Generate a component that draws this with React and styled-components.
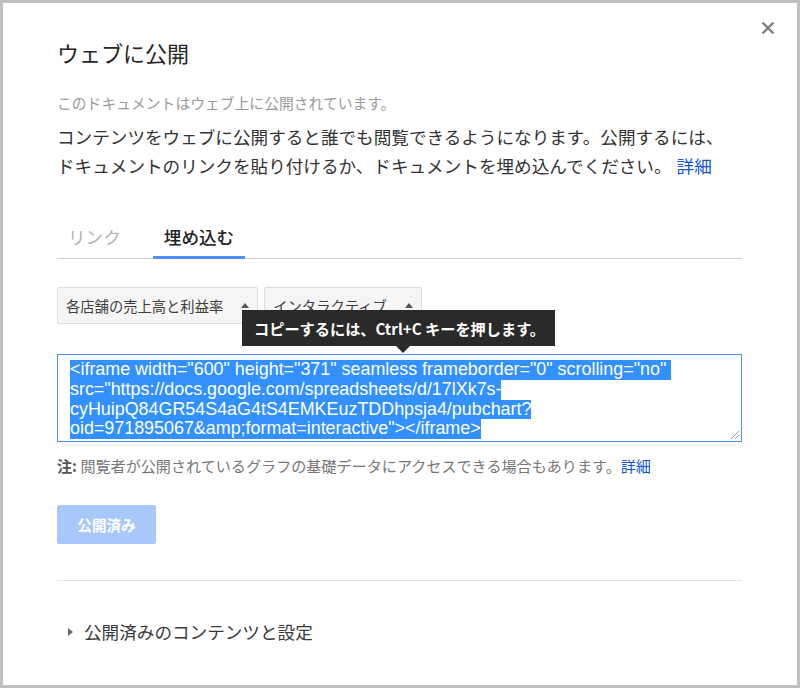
import React from "react";
import styled, { createGlobalStyle } from "styled-components";

const GlobalStyle = createGlobalStyle`
  html, body { margin: 0; padding: 0; background: #fff; }
  body { font-family: "Noto Sans CJK JP", "Noto Sans", sans-serif; }
  * { box-sizing: border-box; }
`;

const Frame = styled.div`
  position: relative;
  width: 800px;
  height: 688px;
  border: 3px solid #bfbfbf;
  background: #fff;
  padding: 0 55px 0 54px;
  display: flex;
  flex-direction: column;
`;

const CloseButton = styled.button`
  position: absolute;
  top: 15px;
  right: 19px;
  width: 20px;
  height: 20px;
  padding: 0;
  border: 0;
  background: transparent;
  display: flex;
  align-items: center;
  justify-content: center;
  cursor: pointer;
`;

const Title = styled.h1`
  margin: 36px 0 0;
  font-size: 22px;
  line-height: 26px;
  font-weight: 400;
  color: #262626;
`;

const Subtitle = styled.p`
  margin: 28px 0 0;
  font-size: 14.8px;
  line-height: 20px;
  color: #9a9a9a;
`;

const Paragraph = styled.p`
  margin: 9px 0 0;
  font-size: 17.6px;
  line-height: 29px;
  color: #333;
`;

const ParaLine = styled.span`
  display: block;
  white-space: nowrap;
`;

const Link = styled.a`
  color: #1155cc;
  text-decoration: none;
  margin-left: ${(p) => (p.$gap ? "5px" : "0")};
`;

const TabBar = styled.div`
  margin-top: 44px;
  display: flex;
  gap: 21px;
  border-bottom: 1px solid #cfcfcf;
`;

const Tab = styled.div`
  padding: 0 11px 6px;
  font-size: 17.6px;
  line-height: 26px;
  color: ${(p) => (p.$active ? "#222" : "#b3b3b3")};
  font-weight: ${(p) => (p.$active ? 500 : 400)};
  border-bottom: 3px solid ${(p) => (p.$active ? "#4d90fe" : "transparent")};
  margin-bottom: -1px;
`;

const EmbedArea = styled.div`
  position: relative;
  margin-top: 28px;
  display: flex;
  flex-direction: column;
`;

const SelectRow = styled.div`
  display: flex;
  gap: 6px;
`;

const Select = styled.div`
  height: 37px;
  display: flex;
  align-items: center;
  padding: 0 8px;
  gap: 18px;
  background: #f5f5f5;
  border: 1px solid #dcdcdc;
  border-radius: 2px;
  font-size: 14.3px;
  color: #3d3d3d;
`;

const Caret = styled.span`
  width: 0;
  height: 0;
  border-left: 4px solid transparent;
  border-right: 4px solid transparent;
  border-bottom: 5px solid #555;
`;

const Tooltip = styled.div`
  position: absolute;
  top: 23px;
  left: 185px;
  width: 313px;
  height: 36px;
  padding: 0 12px;
  display: flex;
  align-items: center;
  background: #2a2a2a;
  color: #fff;
  font-size: 15.2px;
  font-weight: 700;
  white-space: nowrap;
  z-index: 2;
  &::after {
    content: "";
    position: absolute;
    bottom: -7px;
    left: 154px;
    border-left: 7px solid transparent;
    border-right: 7px solid transparent;
    border-top: 7px solid #2a2a2a;
  }
`;

const CodeBox = styled.div`
  position: relative;
  margin-top: 30px;
  height: 88px;
  border: 1px solid #4d90fe;
  padding: 5px 12px 0;
  font-family: "Liberation Sans", Arial, sans-serif;
  font-size: 17.9px;
  line-height: 19.8px;
  background: #fff;
`;

const CodeLine = styled.span`
  display: block;
  width: fit-content;
  white-space: pre;
  background: #3390ff;
  color: #fff;
`;

const Grip = styled.svg`
  position: absolute;
  right: 1px;
  bottom: 1px;
`;

const Note = styled.p`
  margin: 13px 0 0;
  font-size: 15.1px;
  line-height: 20px;
  color: #777;
  b { color: #555; font-weight: 700; }
`;

const PublishedButton = styled.button`
  margin-top: 30px;
  width: 99px;
  height: 39px;
  border: 0;
  border-radius: 2px;
  background: #a8c7fb;
  color: #fff;
  font-family: inherit;
  font-size: 14.6px;
  font-weight: 700;
  padding: 0;
`;

const Divider = styled.hr`
  margin: 36px 0 0;
  border: 0;
  border-top: 1px solid #e3e3e3;
`;

const Disclosure = styled.div`
  margin-top: 38px;
  display: flex;
  align-items: center;
  gap: 11px;
  padding-left: 11px;
  font-size: 17.6px;
  line-height: 26px;
  color: #3a3a3a;
`;

const Triangle = styled.span`
  width: 0;
  height: 0;
  border-top: 4px solid transparent;
  border-bottom: 4px solid transparent;
  border-left: 5px solid #666;
`;

const codeLines = [
  '<iframe width="600" height="371" seamless frameborder="0" scrolling="no" ',
  'src="https://docs.google.com/spreadsheets/d/17lXk7s-',
  "cyHuipQ84GR54S4aG4tS4EMKEuzTDDhpsja4/pubchart?",
  'oid=971895067&amp;format=interactive"></iframe>',
];

export default function App() {
  return (
    <>
      <GlobalStyle />
      <Frame>
        <CloseButton aria-label="閉じる">
          <svg width="14" height="14" viewBox="0 0 14 14">
            <path d="M1.5 1.5 L12.5 12.5 M12.5 1.5 L1.5 12.5" stroke="#808080" strokeWidth="2.4" />
          </svg>
        </CloseButton>
        <Title>ウェブに公開</Title>
        <Subtitle>このドキュメントはウェブ上に公開されています。</Subtitle>
        <Paragraph>
          <ParaLine>コンテンツをウェブに公開すると誰でも閲覧できるようになります。公開するには、</ParaLine>
          <ParaLine>
            <span>ドキュメントのリンクを貼り付けるか、ドキュメントを埋め込んでください。</span>
            <Link href="#" $gap>詳細</Link>
          </ParaLine>
        </Paragraph>
        <TabBar>
          <Tab>リンク</Tab>
          <Tab $active>埋め込む</Tab>
        </TabBar>
        <EmbedArea>
          <SelectRow>
            <Select>
              各店舗の売上高と利益率
              <Caret />
            </Select>
            <Select>
              インタラクティブ
              <Caret />
            </Select>
          </SelectRow>
          <Tooltip>コピーするには、Ctrl+C キーを押します。</Tooltip>
          <CodeBox>
            {codeLines.map((l, i) => (
              <CodeLine key={i}>{l}</CodeLine>
            ))}
            <Grip width="11" height="11" viewBox="0 0 11 11">
              <path d="M10 2 L2 10 M10 6 L6 10" stroke="#999" strokeWidth="1" />
            </Grip>
          </CodeBox>
        </EmbedArea>
        <Note>
          <b>注:</b> 閲覧者が公開されているグラフの基礎データにアクセスできる場合もあります。
          <Link href="#">詳細</Link>
        </Note>
        <div>
          <PublishedButton disabled>公開済み</PublishedButton>
        </div>
        <Divider />
        <Disclosure>
          <Triangle />
          公開済みのコンテンツと設定
        </Disclosure>
      </Frame>
    </>
  );
}
